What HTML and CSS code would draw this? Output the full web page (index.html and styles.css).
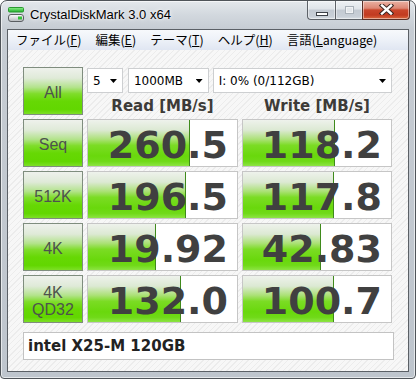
FILE: index.html
```html
<!DOCTYPE html>
<html lang="ja">
<head>
<meta charset="utf-8">
<title>CrystalDiskMark 3.0 x64</title>
<link rel="stylesheet" href="styles.css">
</head>
<body>
<div class="window">
  <div class="titlebar">
    <svg class="app-icon" width="16" height="16" viewBox="0 0 16 16">
      <defs>
        <linearGradient id="gbar" x1="0" y1="0" x2="0" y2="1">
          <stop offset="0" stop-color="#8ef08a"/>
          <stop offset="1" stop-color="#1fae2a"/>
        </linearGradient>
        <linearGradient id="gdisk" x1="0" y1="0" x2="0" y2="1">
          <stop offset="0" stop-color="#ffffff"/>
          <stop offset="1" stop-color="#b4b8bc"/>
        </linearGradient>
      </defs>
      <rect x="0.5" y="0.5" width="15" height="4.5" rx="1" fill="url(#gbar)" stroke="#2a9a30"/>
      <rect x="0.5" y="7.5" width="15" height="7" rx="2.5" fill="url(#gdisk)" stroke="#5a5e62"/>
      <rect x="10" y="9.5" width="4" height="3" fill="#34c23a"/>
    </svg>
    <span class="title">CrystalDiskMark 3.0 x64</span>
    <div class="caption-buttons">
      <div class="cbtn cbtn-min"><span class="glyph-min"></span></div>
      <div class="cbtn cbtn-max"><span class="glyph-max"></span></div>
      <div class="cbtn cbtn-close">
        <svg width="15" height="11" viewBox="0 0 15 11">
          <path d="M3 1.5 L12 9.5 M12 1.5 L3 9.5" stroke="#3b2520" stroke-width="4.4" stroke-linecap="square"/>
          <path d="M3 1.5 L12 9.5 M12 1.5 L3 9.5" stroke="#ffffff" stroke-width="2.4" stroke-linecap="square"/>
        </svg>
      </div>
    </div>
  </div>
  <div class="client">
    <div class="menubar">
      <span class="menu-item">ファイル(<u>F</u>)</span>
      <span class="menu-item">編集(<u>E</u>)</span>
      <span class="menu-item">テーマ(<u>T</u>)</span>
      <span class="menu-item">ヘルプ(<u>H</u>)</span>
      <span class="menu-item">言語(<u>L</u>anguage)</span>
    </div>
    <div class="content">
      <div class="grid">
        <div class="label-btn">All</div>
        <div class="top-controls">
          <div class="selects">
            <div class="select sel-count"><span>5</span><i class="arrow"></i></div>
            <div class="select sel-size"><span>1000MB</span><i class="arrow"></i></div>
            <div class="select sel-drive"><span>I: 0% (0/112GB)</span><i class="arrow"></i></div>
          </div>
          <div class="headers">
            <div class="header">Read [MB/s]</div>
            <div class="header">Write [MB/s]</div>
          </div>
        </div>

        <div class="label-btn">Seq</div>
        <div class="value"><div class="bar" style="width:102px"></div><span class="num">260.5</span></div>
        <div class="value"><div class="bar" style="width:92px"></div><span class="num">118.2</span></div>

        <div class="label-btn">512K</div>
        <div class="value"><div class="bar" style="width:98px"></div><span class="num">196.5</span></div>
        <div class="value"><div class="bar" style="width:91px"></div><span class="num">117.8</span></div>

        <div class="label-btn">4K</div>
        <div class="value"><div class="bar" style="width:68px"></div><span class="num">19.92</span></div>
        <div class="value"><div class="bar" style="width:78px"></div><span class="num">42.83</span></div>

        <div class="label-btn label-two">4K<br>QD32</div>
        <div class="value"><div class="bar" style="width:93px"></div><span class="num">132.0</span></div>
        <div class="value"><div class="bar" style="width:91px"></div><span class="num">100.7</span></div>
      </div>
      <div class="drive-name">intel X25-M 120GB</div>
    </div>
  </div>
</div>
</body>
</html>
```

FILE: styles.css
```css
* { box-sizing: border-box; }
html, body { margin: 0; padding: 0; }
body {
  width: 416px;
  height: 379px;
  overflow: hidden;
  background: #ffffff;
  font-family: "Liberation Sans", Arial, sans-serif;
}

.window {
  width: 416px;
  height: 379px;
  border: 1px solid #4f5459;
  border-radius: 7px 7px 4px 4px;
  background: linear-gradient(to bottom, #e4e8ec 0px, #d2d8de 14px, #c6ccd3 28px, #c4cad1 120px, #bec5cd 100%);
  box-shadow: inset 0 0 0 1px rgba(255, 255, 255, 0.6);
  padding: 0 6px 6px 6px;
  display: flex;
  flex-direction: column;
}

/* title bar */
.titlebar {
  height: 28px;
  display: flex;
  align-items: flex-start;
  flex: none;
}
.app-icon {
  margin: 6px 0 0 1px;
  flex: none;
}
.title {
  margin-left: 6px;
  padding-top: 6px;
  font-size: 13px;
  line-height: 16px;
  color: #000;
  text-shadow: 0 0 5px rgba(255, 255, 255, 0.95), 0 0 2px rgba(255, 255, 255, 0.9);
}
.caption-buttons {
  margin-left: auto;
  margin-right: -1px;
  display: flex;
  height: 19px;
}
.cbtn {
  height: 19px;
  border: 1px solid #5d6268;
  border-top: none;
  display: flex;
  align-items: center;
  justify-content: center;
  box-shadow: inset 0 0 0 1px rgba(255, 255, 255, 0.45);
}
.cbtn-min {
  width: 28px;
  border-radius: 0 0 0 4px;
  border-right: none;
  background: linear-gradient(to bottom, #eef1f4 0%, #dfe4e9 45%, #c3cad2 50%, #c8cfd7 85%, #d8dee4 100%);
}
.cbtn-max {
  width: 27px;
  border-right: none;
  background: linear-gradient(to bottom, #eef1f4 0%, #dfe4e9 45%, #c3cad2 50%, #c8cfd7 85%, #d8dee4 100%);
}
.cbtn-close {
  width: 48px;
  border-radius: 0 0 4px 0;
  border-color: #5a3128;
  background: linear-gradient(to bottom, #eab2a4 0%, #dd8774 40%, #c9462b 50%, #c23a20 78%, #d9693f 100%);
}
.glyph-min {
  display: block;
  width: 12px;
  height: 4px;
  margin-top: 7px;
  background: #ffffff;
  border: 1px solid #3d4248;
}
.glyph-max {
  display: block;
  width: 9px;
  height: 8px;
  margin-bottom: 1px;
  border: 1px solid #a9b1b9;
  background: #e2e6ea;
  box-shadow: inset 0 0 0 1px #f1f3f5;
}
.cbtn-close svg { display: block; margin-top: -1px; }

/* client */
.client {
  flex: 1;
  border: 1px solid #5b6066;
  background: repeating-linear-gradient(135deg, #f7f7f7 0px, #f7f7f7 3px, #ececec 3px, #ececec 4px);
  display: flex;
  flex-direction: column;
}

.menubar {
  height: 20px;
  flex: none;
  display: flex;
  padding-left: 1px;
  background: linear-gradient(to bottom, #f7f9fc 0%, #eef2f8 45%, #e0e6f2 100%);
  font-family: "Noto Sans CJK JP", "Liberation Sans", sans-serif;
  font-size: 12.5px;
  line-height: 20px;
  color: #000;
}
.menu-item {
  padding: 0 7px;
  white-space: nowrap;
}
.menu-item u { text-underline-offset: 1px; }

.content {
  padding: 17px 0 0 15px;
}

.grid {
  display: grid;
  grid-template-columns: 60px 151px 150px;
  grid-auto-rows: 48px;
  gap: 4px;
}

.label-btn {
  border: 1px solid #7f8d7e;
  background: linear-gradient(to bottom, #eef1ec 0%, #dfead8 22%, #b3e38c 42%, #7fdd2a 56%, #66d804 72%, #62d700 90%, #7ddf26 100%);
  display: flex;
  align-items: center;
  justify-content: center;
  text-align: center;
  font-family: "Liberation Sans", Arial, sans-serif;
  font-size: 16px;
  line-height: 17px;
  color: #4d524d;
  padding-top: 3px;
}

.top-controls {
  grid-column: 2 / 4;
  display: flex;
  flex-direction: column;
}
.selects {
  display: flex;
  margin-top: 1px;
  height: 25px;
}
.select {
  height: 25px;
  border: 1px solid #cdcfd1;
  background: #ffffff;
  display: flex;
  align-items: center;
  padding: 0 5px 0 5px;
  font-family: "DejaVu Sans", Verdana, sans-serif;
  font-size: 12px;
  color: #000;
}
.select span { flex: 1; white-space: nowrap; }
.sel-count { width: 36px; }
.sel-size { width: 81px; margin-left: 5px; }
.sel-drive { width: 180px; margin-left: 4px; }
.arrow {
  display: block;
  width: 7px;
  height: 4px;
  background: #000;
  clip-path: polygon(0 0, 100% 0, 50% 100%);
  flex: none;
  margin-top: 1px;
}

.headers {
  display: grid;
  grid-template-columns: 151px 150px;
  column-gap: 4px;
  margin-top: 4px;
}
.header {
  text-align: center;
  font-family: "DejaVu Sans", Verdana, sans-serif;
  font-weight: bold;
  font-size: 15px;
  line-height: 18px;
  color: #3d3b38;
}

.value {
  position: relative;
  border: 1px solid #c6c6c6;
  background: #ffffff;
  text-align: right;
  padding: 5px 9px 0 0;
  overflow: hidden;
}
.bar {
  position: absolute;
  left: 0;
  top: 0;
  bottom: 0;
  background: linear-gradient(to bottom, #eef2ec 0%, #dce9d3 22%, #abe176 42%, #7bdc24 55%, #69d80c 78%, #70da18 90%, #8de444 100%);
  border-right: 1px solid #3f8a1c;
}
.num {
  position: relative;
  font-family: "DejaVu Sans", Verdana, sans-serif;
  font-weight: bold;
  font-size: 38px;
  line-height: 40px;
  color: #404040;
}

.drive-name {
  margin-top: 9px;
  width: 371px;
  height: 28px;
  border: 1px solid #c3c3c3;
  background: #ffffff;
  padding-left: 4px;
  font-family: "DejaVu Sans", Verdana, sans-serif;
  font-weight: bold;
  font-size: 15px;
  line-height: 26px;
  color: #222222;
}
```
